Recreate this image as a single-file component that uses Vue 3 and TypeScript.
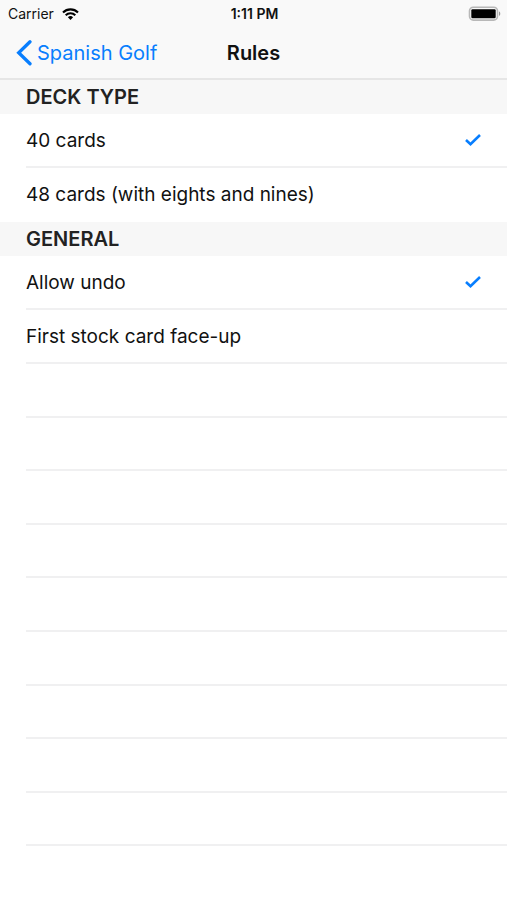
<script setup lang="ts">
import { reactive, ref } from 'vue'

const deck = ref<'40' | '48'>('40')
const general = reactive({ undo: true, faceUp: false })
const emptyRows = 10
</script>

<template>
  <div class="screen">
    <header class="top">
      <div class="status">
        <div class="carrier">
          <span>Carrier</span>
          <svg class="wifi" viewBox="0 0 17 12" aria-hidden="true">
            <path d="M8.5 12 5.9 9.3a3.7 3.7 0 0 1 5.2 0z" fill="#000" />
            <path d="M3.7 7.3a6.8 6.8 0 0 1 9.6 0M1 4.5a10.6 10.6 0 0 1 15 0" fill="none" stroke="#000" stroke-width="2.1" />
          </svg>
        </div>
        <span class="time">1:11 PM</span>
        <svg class="battery" viewBox="0 0 33 14" aria-hidden="true">
          <rect x="1.500" y="0.3" width="28" height="12.800" rx="3.800" fill="none" stroke="#b8b8b8" stroke-width="1.6" />
          <rect x="3.300" y="2.200" width="24.400" height="9" rx="1.200" fill="#000" />
          <path d="M31 4.500c1.700.6 1.700 3.800 0 4.400z" fill="#999" />
        </svg>
      </div>
      <nav class="nav">
        <a class="back" href="#">
          <svg class="chevron" viewBox="0 0 16 26" aria-hidden="true">
            <path d="M14 1.800 2.700 12.800 14 23.800" fill="none" stroke="#087efe" stroke-width="3.300" stroke-linecap="round" />
          </svg>
          <span>Spanish Golf</span>
        </a>
        <h1 class="title">Rules</h1>
      </nav>
    </header>

    <main class="content">
      <section>
        <h2 class="heading">DECK TYPE</h2>
        <div class="group">
          <label class="row">
            <span>40 cards</span>
            <input v-model="deck" class="control" type="radio" name="deck" value="40" />
            <svg class="check" viewBox="0 0 16 14" aria-hidden="true"><path d="M1 7 5.500 11.200 15 2" /></svg>
          </label>
          <label class="row last">
            <span>48 cards (with eights and nines)</span>
            <input v-model="deck" class="control" type="radio" name="deck" value="48" />
            <svg class="check" viewBox="0 0 16 14" aria-hidden="true"><path d="M1 7 5.500 11.200 15 2" /></svg>
          </label>
        </div>
      </section>
      <section>
        <h2 class="heading">GENERAL</h2>
        <div class="group">
          <label class="row">
            <span>Allow undo</span>
            <input v-model="general.undo" class="control" type="checkbox" />
            <svg class="check" viewBox="0 0 16 14" aria-hidden="true"><path d="M1 7 5.500 11.200 15 2" /></svg>
          </label>
          <label class="row">
            <span>First stock card face-up</span>
            <input v-model="general.faceUp" class="control" type="checkbox" />
            <svg class="check" viewBox="0 0 16 14" aria-hidden="true"><path d="M1 7 5.500 11.200 15 2" /></svg>
          </label>
        </div>
      </section>
      <div class="filler" aria-hidden="true">
        <div v-for="n in emptyRows" :key="n" class="blank"></div>
      </div>
    </main>
  </div>
</template>

<style>
body {
  background: #fff;
}
</style>

<style scoped>
.screen {
  display: flex;
  flex-direction: column;
  min-height: 100vh;
  font-family: Inter, "Liberation Sans", sans-serif;
  font-size: 19px;
  color: #111;
}
.top {
  background: #f9f9f9;
  border-bottom: 2px solid #e6e6e6;
}
.status {
  display: grid;
  grid-template-columns: 1fr auto 1fr;
  align-items: center;
  height: 27px;
  padding: 0 6px 0 8px;
  font-size: 14px;
}
.carrier {
  display: flex;
  align-items: center;
  gap: 8px;
}
.wifi {
  width: 17px;
  height: 12px;
}
.time {
  font-weight: 600;
}
.battery {
  width: 33px;
  height: 14px;
  justify-self: end;
  overflow: visible;
}
.nav {
  display: grid;
  grid-template-columns: 1fr auto 1fr;
  align-items: center;
  height: 51px;
  padding: 0 16px;
}
.back {
  display: flex;
  align-items: center;
  gap: 5px;
  color: #087efe;
  font-size: 20px;
  text-decoration: none;
  white-space: nowrap;
}
.chevron {
  width: 16px;
  height: 26px;
}
.title {
  margin: 0;
  font-size: 20px;
  font-weight: 600;
}
.content {
  display: flex;
  flex: 1;
  flex-direction: column;
}
.heading {
  margin: 0;
  padding: 0 26px;
  background: #f7f7f7;
  font-size: 20px;
  font-weight: 600;
  line-height: 34px;
  color: #222;
}
.group {
  padding-left: 26px;
}
.row {
  display: flex;
  align-items: center;
  justify-content: space-between;
  box-sizing: border-box;
  height: 54px;
  padding-right: 26px;
  border-bottom: 2px solid #f0f0f1;
}
.row.last {
  border-bottom-color: transparent;
}
.control {
  appearance: none;
  width: 0;
  height: 0;
  margin: 0;
}
.check {
  display: none;
  width: 16px;
  height: 14px;
  fill: none;
  stroke: #087efe;
  stroke-width: 2.600;
}
.control:checked + .check {
  display: block;
}
.filler {
  display: grid;
  flex: 1;
  grid-auto-rows: 1fr;
  padding-left: 26px;
}
.blank {
  border-bottom: 2px solid #f0f0f1;
}
.blank:last-child {
  border-bottom: 0;
}
</style>
